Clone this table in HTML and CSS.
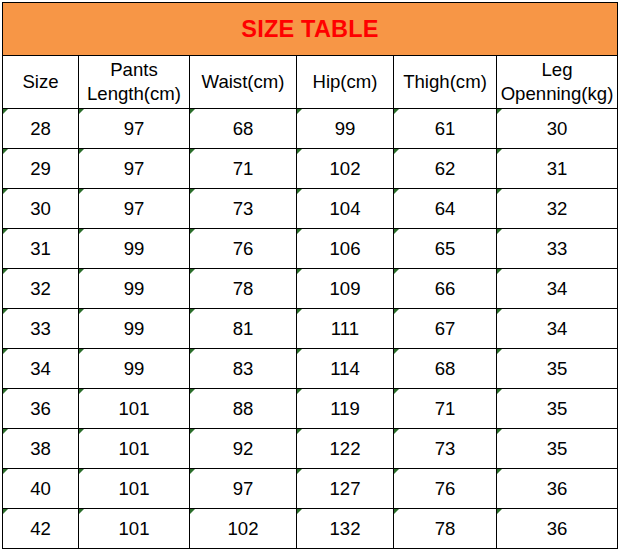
FILE: index.html
```html
<!DOCTYPE html>
<html>
<head>
<meta charset="utf-8">
<title>Size Table</title>
<link rel="stylesheet" href="styles.css">
</head>
<body>
<div class="sheet">
  <div class="title">SIZE TABLE</div>
  <div class="cell head">Size</div>
  <div class="cell head">Pants<br>Length(cm)</div>
  <div class="cell head">Waist(cm)</div>
  <div class="cell head">Hip(cm)</div>
  <div class="cell head">Thigh(cm)</div>
  <div class="cell head">Leg<br>Openning(kg)</div>

  <div class="cell num">28</div><div class="cell num">97</div><div class="cell num">68</div><div class="cell num">99</div><div class="cell num">61</div><div class="cell num">30</div>
  <div class="cell num">29</div><div class="cell num">97</div><div class="cell num">71</div><div class="cell num">102</div><div class="cell num">62</div><div class="cell num">31</div>
  <div class="cell num">30</div><div class="cell num">97</div><div class="cell num">73</div><div class="cell num">104</div><div class="cell num">64</div><div class="cell num">32</div>
  <div class="cell num">31</div><div class="cell num">99</div><div class="cell num">76</div><div class="cell num">106</div><div class="cell num">65</div><div class="cell num">33</div>
  <div class="cell num">32</div><div class="cell num">99</div><div class="cell num">78</div><div class="cell num">109</div><div class="cell num">66</div><div class="cell num">34</div>
  <div class="cell num">33</div><div class="cell num">99</div><div class="cell num">81</div><div class="cell num">111</div><div class="cell num">67</div><div class="cell num">34</div>
  <div class="cell num">34</div><div class="cell num">99</div><div class="cell num">83</div><div class="cell num">114</div><div class="cell num">68</div><div class="cell num">35</div>
  <div class="cell num">36</div><div class="cell num">101</div><div class="cell num">88</div><div class="cell num">119</div><div class="cell num">71</div><div class="cell num">35</div>
  <div class="cell num">38</div><div class="cell num">101</div><div class="cell num">92</div><div class="cell num">122</div><div class="cell num">73</div><div class="cell num">35</div>
  <div class="cell num">40</div><div class="cell num">101</div><div class="cell num">97</div><div class="cell num">127</div><div class="cell num">76</div><div class="cell num">36</div>
  <div class="cell num">42</div><div class="cell num">101</div><div class="cell num">102</div><div class="cell num">132</div><div class="cell num">78</div><div class="cell num">36</div>
</div>
</body>
</html>
```

FILE: styles.css
```css
html, body {
  margin: 0;
  padding: 0;
  background: #ffffff;
}

body {
  width: 621px;
  height: 551px;
  overflow: hidden;
  font-family: "Liberation Sans", Arial, sans-serif;
  color: #000;
  padding: 2px 0 0 2px;
  box-sizing: border-box;
}

.sheet {
  display: grid;
  grid-template-columns: 75px 110px 106px 96px 102px 120px;
  grid-template-rows: 52px 52px repeat(11, 39px);
  gap: 1px;
  padding: 1px;
  background: #000;
  width: max-content;
}

.title {
  grid-column: 1 / -1;
  background: #f79646;
  color: #ff0000;
  font-weight: bold;
  font-size: 23.5px;
  display: flex;
  align-items: center;
  justify-content: center;
  letter-spacing: 0.2px;
}

.cell {
  background: #fff;
  display: flex;
  align-items: center;
  justify-content: center;
  text-align: center;
  font-size: 18.6px;
  position: relative;
}

.head {
  line-height: 24px;
}

.num::before {
  content: "";
  position: absolute;
  top: 0;
  left: 0;
  width: 0;
  height: 0;
  border-top: 5px solid #2b6e2b;
  border-right: 5px solid transparent;
}
```
